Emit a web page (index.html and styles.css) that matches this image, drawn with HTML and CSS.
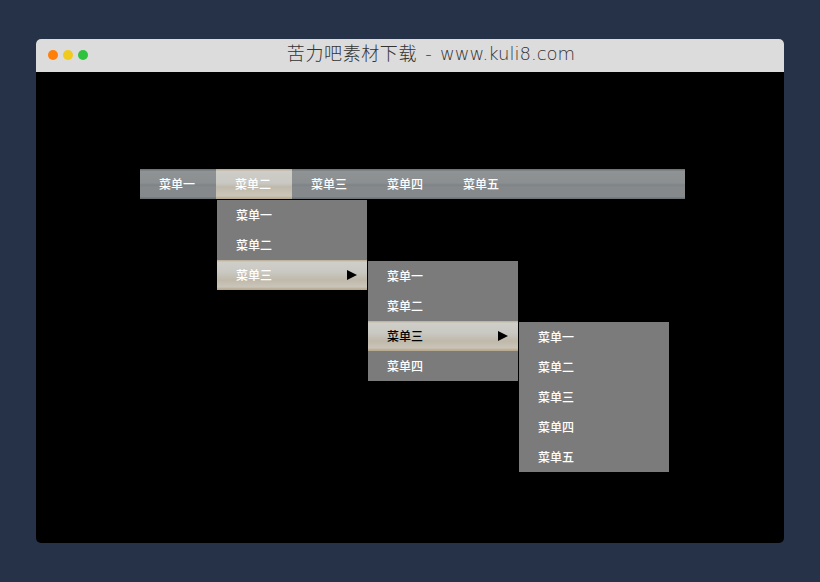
FILE: index.html
```html
<!DOCTYPE html>
<html lang="zh">
<head>
<meta charset="utf-8">
<title>苦力吧素材下载</title>
<link rel="stylesheet" href="styles.css">
</head>
<body>
<div class="window">
  <header class="titlebar">
    <div class="dots"><span class="dot orange"></span><span class="dot yellow"></span><span class="dot green"></span></div>
    <h1 class="title"><span class="title-cjk">苦力吧素材下载</span> - www.kuli8.com</h1>
  </header>
  <main class="stage">
    <nav class="menubar">
      <ul class="top">
        <li class="top-item"><a>菜单一</a></li>
        <li class="top-item active"><a>菜单二</a>
          <ul class="sub first">
            <li><a>菜单一</a></li>
            <li><a>菜单二</a></li>
            <li class="open"><a>菜单三</a><span class="arrow"></span>
              <ul class="sub nested">
                <li><a>菜单一</a></li>
                <li><a>菜单二</a></li>
                <li class="open dark"><a>菜单三</a><span class="arrow"></span>
                  <ul class="sub nested">
                    <li><a>菜单一</a></li>
                    <li><a>菜单二</a></li>
                    <li><a>菜单三</a></li>
                    <li><a>菜单四</a></li>
                    <li><a>菜单五</a></li>
                  </ul>
                </li>
                <li><a>菜单四</a></li>
              </ul>
            </li>
          </ul>
        </li>
        <li class="top-item"><a>菜单三</a></li>
        <li class="top-item"><a>菜单四</a></li>
        <li class="top-item"><a>菜单五</a></li>
      </ul>
    </nav>
  </main>
</div>
</body>
</html>
```
FILE: styles.css
```css
* { box-sizing: border-box; margin: 0; padding: 0; }
html, body { height: 100%; }
body {
  background: #253248;
  padding: 39px 36px;
  font-family: "Noto Sans CJK SC", "Liberation Sans", sans-serif;
}
.window {
  width: 748px;
  height: 504px;
  border-radius: 5px;
  overflow: hidden;
  background: #000;
  display: flex;
  flex-direction: column;
}
.titlebar {
  height: 33px;
  flex: none;
  background: #dcdcdc;
  display: flex;
  align-items: center;
  justify-content: center;
  padding-left: 42px;
  position: relative;
}
.dots {
  position: absolute;
  left: 12px;
  top: 11px;
  display: flex;
  gap: 5px;
}
.dot { width: 10px; height: 10px; border-radius: 50%; }
.orange { background: #ff7f0a; }
.yellow { background: #f0cb1e; }
.green { background: #2fc23d; }
.title {
  font-family: "DejaVu Sans", "Noto Sans CJK SC", sans-serif;
  font-size: 18px;
  font-weight: 200;
  color: #333;
  line-height: 30px;
  height: 33px;
  white-space: nowrap;
  word-spacing: 2.5px;
}
.title-cjk { letter-spacing: 0.6px; }
.stage {
  flex: 1;
  padding: 97px 99px 0 104px;
}
.menubar {
  height: 30px;
  background: linear-gradient(#6f7579 0, #6f7579 1px, #909394 2px, #8b8f91 14px, #7e8385 16px, #86898b 18px, #85898b 28px, #6d7276 29px, #6d7276 100%);
}
.top { display: flex; list-style: none; }
ul { list-style: none; }
.top-item { width: 76px; height: 30px; position: relative; text-align: center; }
.top-item > a { display: block; line-height: 30px; font-size: 12px; font-weight: 500; color: #fff; padding-right: 2px; }
.top-item.active > a {
  background: linear-gradient(#bcae92 0, #bcae92 1px, #cfcdc8 2px, #c9c8c2 14px, #bfb9ac 18px, #cbc7b8 27px, #b9ab92 29px, #b9ab92 100%);
}
.sub {
  position: absolute;
  width: 150px;
  background: #7b7b7b;
}
.first { left: 1px; top: 31px; }
.nested { left: 151px; top: 1px; }
.sub > li { height: 30px; position: relative; text-align: left; }
.sub > li > a { display: block; line-height: 30px; font-size: 12px; font-weight: 500; color: #fff; padding: 0 0 0 19px; }
.sub > li.open {
  background: linear-gradient(#b9ab92 0, #d0cec8 2px, #c9c8c2 12px, #c0b9aa 20px, #c9c5b8 27px, #b9ab92 29px, #b9ab92 100%);
}
.sub > li.dark > a { color: #000; }
.arrow {
  position: absolute;
  right: 10px;
  top: 10px;
  width: 0;
  height: 0;
  border-left: 10px solid #000;
  border-top: 5px solid transparent;
  border-bottom: 5px solid transparent;
}
```
